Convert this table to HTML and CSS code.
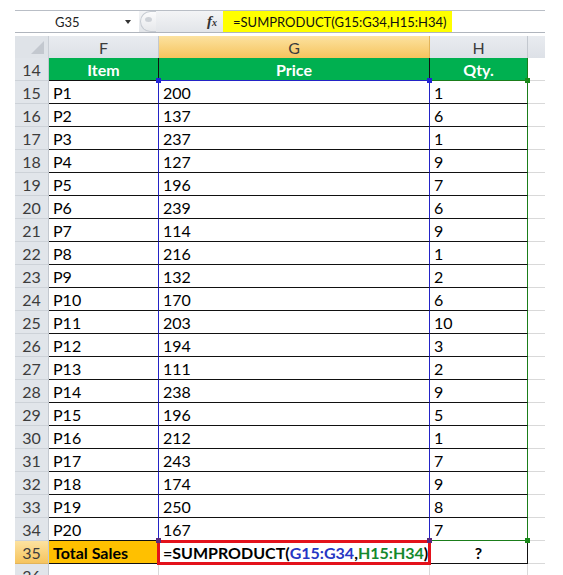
FILE: index.html
```html
<!DOCTYPE html>
<html>
<head>
<meta charset="utf-8">
<link rel="stylesheet" href="styles.css">
</head>
<body>
<div class="sheet">
  <div class="fbar">
    <div class="namebox"><span class="nb-text">G35</span><span class="nb-arrow"></span></div>
    <div class="fbtn"><span class="knob"><span class="knob-in"></span></span><span class="fx">f<span class="fx-sub">x</span></span></div>
    <div class="finput"><span class="fhl">=SUMPRODUCT(G15:G34,H15:H34)</span></div>
  </div>
  <div class="grid">
    <div class="corner"><svg width="33" height="22" viewBox="0 0 33 22"><polygon points="29,5 29,18 16,18" fill="#c3c8cf"/></svg></div>
    <div class="ch">F</div>
    <div class="ch sel">G</div>
    <div class="ch">H</div>
    <div class="ch end"></div>

    <div class="rh">14</div>
    <div class="c hd f">Item</div>
    <div class="c hd g">Price</div>
    <div class="c hd h">Qty.</div>
    <div class="c x"></div>

    <div class="rh">15</div><div class="c f">P1</div><div class="c g">200</div><div class="c h">1</div><div class="c x"></div>
    <div class="rh">16</div><div class="c f">P2</div><div class="c g">137</div><div class="c h">6</div><div class="c x"></div>
    <div class="rh">17</div><div class="c f">P3</div><div class="c g">237</div><div class="c h">1</div><div class="c x"></div>
    <div class="rh">18</div><div class="c f">P4</div><div class="c g">127</div><div class="c h">9</div><div class="c x"></div>
    <div class="rh">19</div><div class="c f">P5</div><div class="c g">196</div><div class="c h">7</div><div class="c x"></div>
    <div class="rh">20</div><div class="c f">P6</div><div class="c g">239</div><div class="c h">6</div><div class="c x"></div>
    <div class="rh">21</div><div class="c f">P7</div><div class="c g">114</div><div class="c h">9</div><div class="c x"></div>
    <div class="rh">22</div><div class="c f">P8</div><div class="c g">216</div><div class="c h">1</div><div class="c x"></div>
    <div class="rh">23</div><div class="c f">P9</div><div class="c g">132</div><div class="c h">2</div><div class="c x"></div>
    <div class="rh">24</div><div class="c f">P10</div><div class="c g">170</div><div class="c h">6</div><div class="c x"></div>
    <div class="rh">25</div><div class="c f">P11</div><div class="c g">203</div><div class="c h">10</div><div class="c x"></div>
    <div class="rh">26</div><div class="c f">P12</div><div class="c g">194</div><div class="c h">3</div><div class="c x"></div>
    <div class="rh">27</div><div class="c f">P13</div><div class="c g">111</div><div class="c h">2</div><div class="c x"></div>
    <div class="rh">28</div><div class="c f">P14</div><div class="c g">238</div><div class="c h">9</div><div class="c x"></div>
    <div class="rh">29</div><div class="c f">P15</div><div class="c g">196</div><div class="c h">5</div><div class="c x"></div>
    <div class="rh">30</div><div class="c f">P16</div><div class="c g">212</div><div class="c h">1</div><div class="c x"></div>
    <div class="rh">31</div><div class="c f">P17</div><div class="c g">243</div><div class="c h">7</div><div class="c x"></div>
    <div class="rh">32</div><div class="c f">P18</div><div class="c g">174</div><div class="c h">9</div><div class="c x"></div>
    <div class="rh">33</div><div class="c f">P19</div><div class="c g">250</div><div class="c h">8</div><div class="c x"></div>
    <div class="rh">34</div><div class="c f">P20</div><div class="c g last">167</div><div class="c h last">7</div><div class="c x"></div>

    <div class="rh sel">35</div>
    <div class="c f total">Total Sales</div>
    <div class="c g active"><span class="fk">=SUMPRODUCT(</span><span class="fb">G15:G34</span><span class="fk">,</span><span class="fg">H15:H34</span><span class="fk">)</span></div>
    <div class="c h q">?</div>
    <div class="c x"></div>

    <div class="rh">36</div>
    <div class="c e"></div>
    <div class="c e"></div>
    <div class="c e"></div>
    <div class="c x"></div>

    <span class="hdl blue hdl-1"></span>
    <span class="hdl blue hdl-2"></span>
    <span class="hdl green hdl-3"></span>
    <span class="hdl green hdl-4"></span>
    <span class="hdl purple hdl-5"></span>
    <span class="hdl purple hdl-6"></span>
  </div>
</div>
</body>
</html>
```

FILE: styles.css
```css
* { box-sizing: border-box; }
html, body { margin: 0; padding: 0; overflow: hidden; background: #fff; }
body { width: 563px; height: 575px; font-family: Lato, "Liberation Sans", sans-serif; }

.sheet { padding: 10px 0 0 15px; }

/* formula bar */
.fbar {
  display: flex;
  width: 530px;
  height: 23px;
  border-top: 1px solid #b9bec6;
  border-bottom: 1px solid #b0b5bd;
}
.namebox {
  width: 123px;
  background: #fff;
  display: flex;
  align-items: center;
  font-size: 13px;
  color: #222;
  padding-left: 40px;
  position: relative;
}
.nb-arrow {
  position: absolute;
  left: 110px;
  top: 9px;
  width: 0; height: 0;
  border-left: 3px solid transparent;
  border-right: 3px solid transparent;
  border-top: 4px solid #333;
}
.fbtn {
  width: 85px;
  display: flex;
  align-items: center;
  justify-content: space-between;
  background: linear-gradient(#f3f4f6, #e2e5e9);
  border-left: 1px solid #fff;
  padding-right: 6px;
}
.knob {
  width: 16px;
  height: 21px;
  border: 1px solid #c6cbd2;
  border-right: none;
  border-radius: 11px 0 0 11px;
  background: linear-gradient(#fbfbfc, #e6e8eb);
  margin-left: 1px;
  display: flex;
  align-items: center;
  justify-content: center;
}
.knob-in {
  width: 7px; height: 5px;
  border-radius: 50%;
  background: #cdd1d7;
  margin-top: -4px;
}
.fx {
  font-family: "Liberation Serif", serif;
  font-style: italic;
  font-weight: bold;
  font-size: 15px;
  color: #333;
}
.fx-sub { font-size: 10px; }
.finput {
  flex: 1;
  background: #fff;
  display: flex;
}
.fhl {
  background: #ffff00;
  width: 229px;
  padding-left: 10px;
  font-size: 13px;
  display: flex;
  align-items: center;
  color: #111;
}

/* grid */
.grid {
  margin-top: 3px;
  display: grid;
  grid-template-columns: 34px 110px 271px 98px 17px;
  grid-template-rows: 22px;
  grid-auto-rows: 23px;
  position: relative;
  font-size: 16px;
}
.corner {
  background: #dfe3e8;
  border-right: 1px solid #c9ced5;
}
.ch {
  background: linear-gradient(#e9ecf0, #dde1e7);
  border-right: 1px solid #c3c8cf;
  display: flex;
  align-items: center;
  justify-content: center;
  color: #3c3c3c;
  font-size: 16px;
}
.ch.sel { background: linear-gradient(#fce2a0, #f6c45e); border-right-color: #e2b45a; }
.ch.end { border-right: none; }
.rh {
  background: #e1e5ea;
  border-right: 1px solid #c3c8cf;
  border-bottom: 1px solid #cdd2d8;
  display: flex;
  align-items: center;
  justify-content: center;
  color: #3c3c3c;
  font-size: 16px;
}
.rh.sel { background: linear-gradient(#fce2a0, #f6c45e); border-bottom-color: #e2b45a; }

.c {
  display: flex;
  align-items: center;
  padding-left: 4px;
  border-bottom: 1px solid #111;
  border-right: 1px solid #111;
  color: #000;
  white-space: nowrap;
}
.c.f { border-right-color: #2323c6; }
.c.g { border-right-color: #2323c6; }
.c.h { border-right-color: #1a7d1a; }
.c.x { border-right: none; border-bottom-color: #d9d9d9; }

.c.hd {
  background: #00b050;
  color: #fff;
  font-weight: bold;
  justify-content: center;
  padding-left: 0;
  border-right-color: #111;
}
.c.hd.f { border-bottom-color: #111; }
.c.hd.g { border-bottom-color: #2323c6; }
.c.hd.h { border-bottom-color: #1a7d1a; border-right-color: #1a7d1a; }
.c.g.last { border-bottom-color: #2323c6; }
.c.h.last { border-bottom-color: #1a7d1a; }

.c.total { background: #ffc000; font-weight: bold; border-right-color: #111; }
.c.active {
  position: relative;
  font-weight: bold;
  border-right-color: #111;
}
.c.active::after {
  content: "";
  position: absolute;
  left: -2px; top: -1px; right: -2px; bottom: -2px;
  border: 3px solid #e3121b;
}
.fb { color: #2636c4; }
.fg { color: #14892d; }
.c.q { justify-content: center; padding-left: 0; font-weight: bold; border-right-color: #111; }
.c.e { border-right-color: #d9d9d9; border-bottom-color: #d9d9d9; }

.hdl { position: absolute; width: 5px; height: 5px; }
.hdl.blue { background: #2323d6; }
.hdl.green { background: #1a8a1a; }
.hdl.purple { background: #5a2a7a; }
.hdl-1 { left: 141px; top: 42px; }
.hdl-2 { left: 412px; top: 42px; }
.hdl-3 { left: 510px; top: 42px; }
.hdl-4 { left: 510px; top: 502px; }
.hdl-5 { left: 412px; top: 502px; }
.hdl-6 { left: 141px; top: 502px; }
```
